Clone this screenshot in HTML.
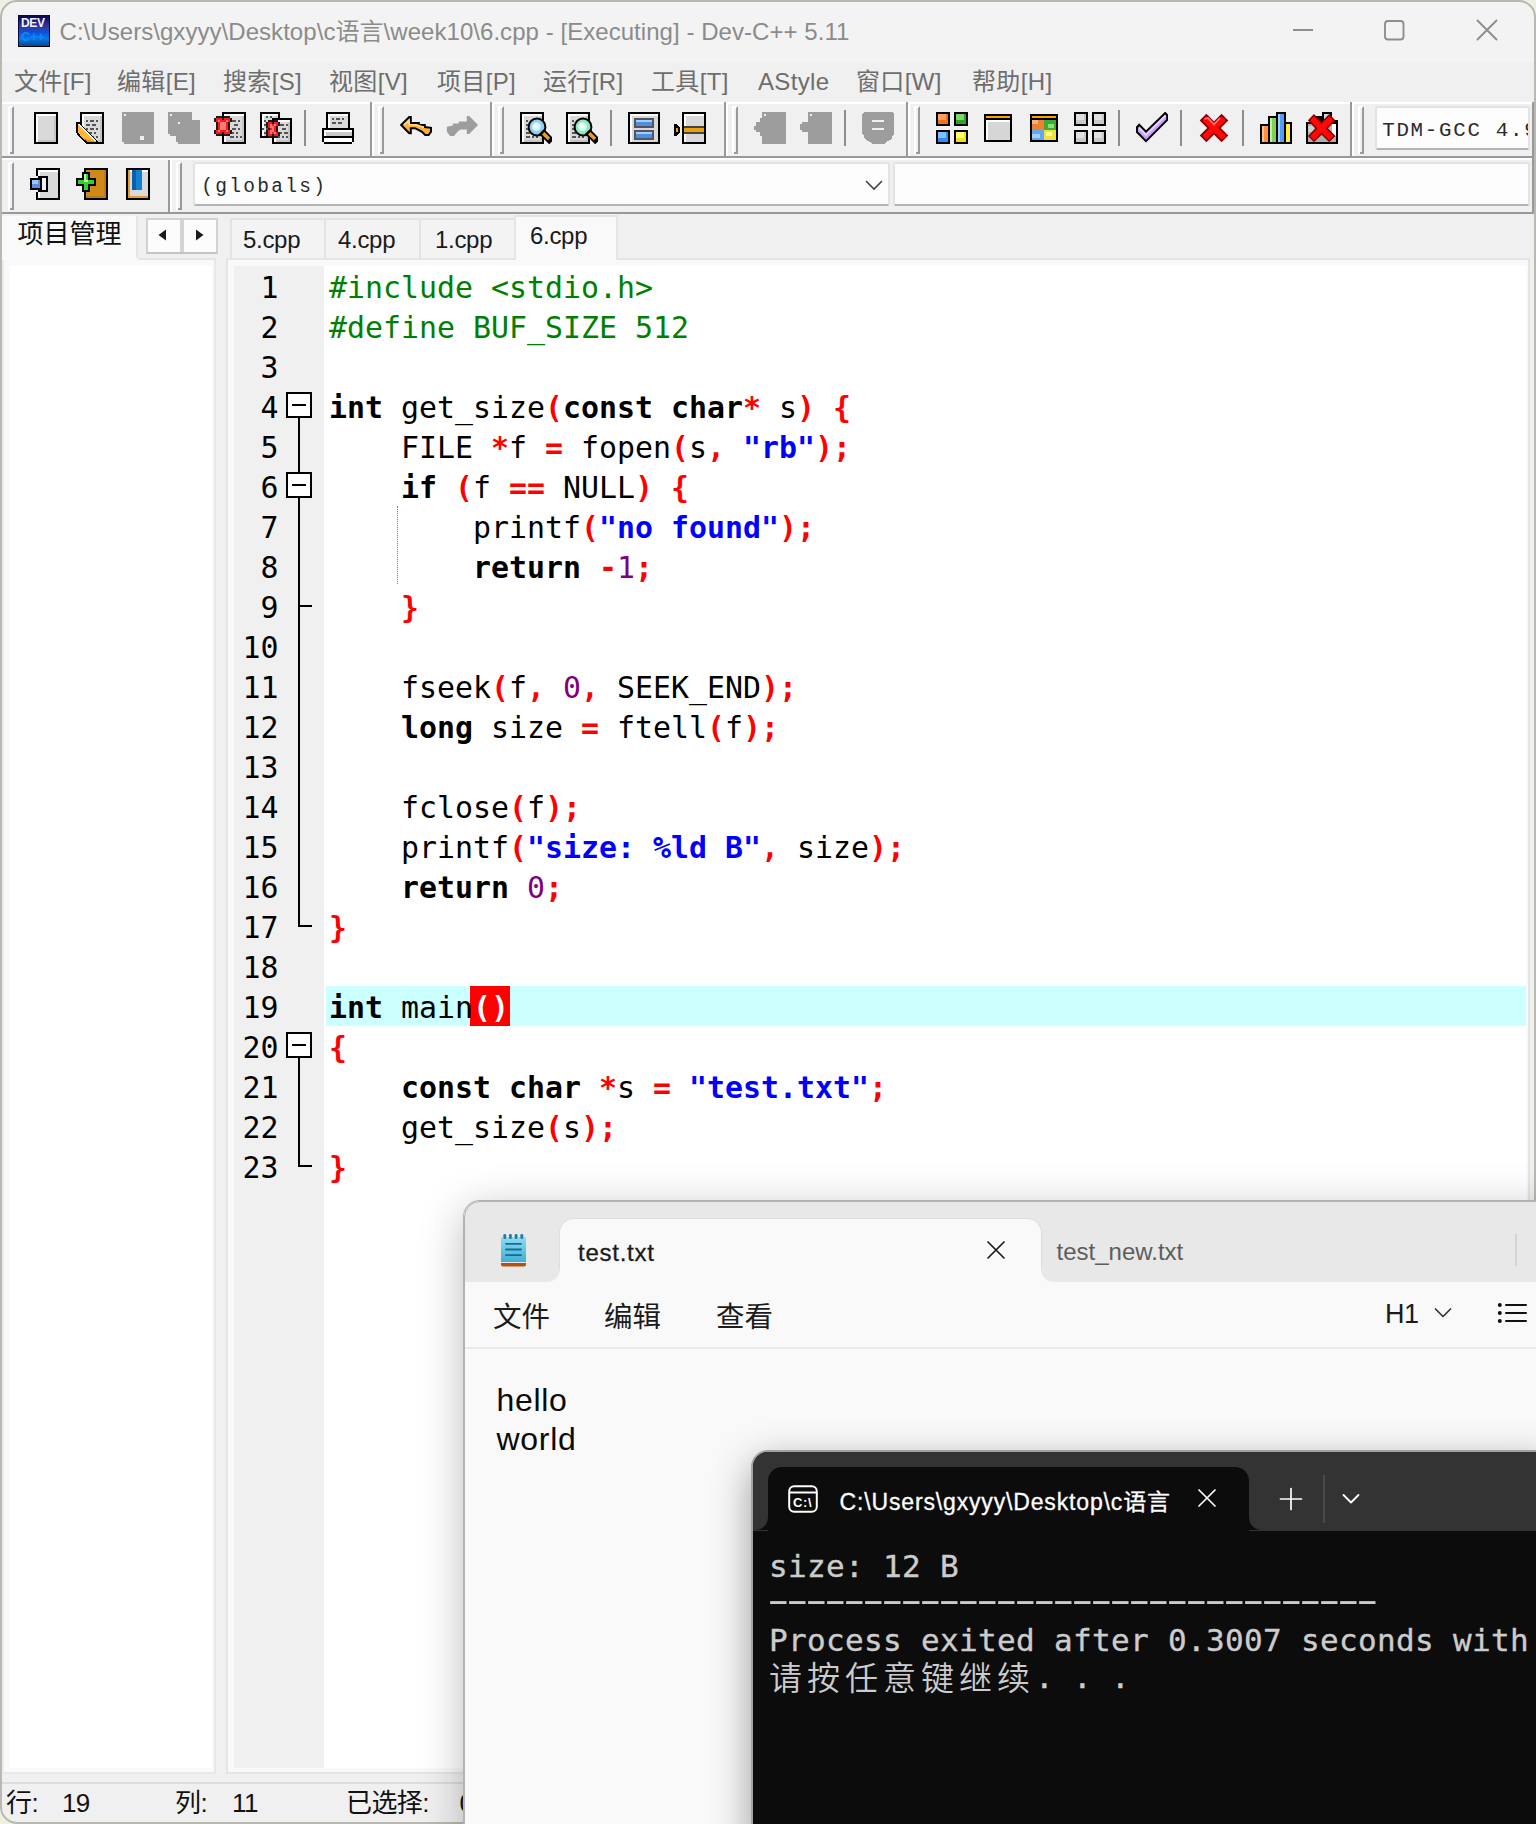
<!DOCTYPE html>
<html lang="zh">
<head>
<meta charset="utf-8">
<title>Dev-C++</title>
<style>
*{box-sizing:border-box;margin:0;padding:0}
html,body{width:1536px;height:1824px;overflow:hidden;background:#f0f0e2}
body{position:relative;font-family:"Liberation Sans","Noto Sans CJK SC",sans-serif;color:#000}
.abs{position:absolute}
#win{position:absolute;left:0;top:0;width:1536px;height:1824px;background:#f0f0f0;border-radius:17px 17px 0 17px;overflow:hidden}
#winb{position:absolute;left:0;top:0;width:1536px;height:1824px;border:2px solid #b9b9b1;border-radius:17px 17px 0 17px;pointer-events:none}
#title{position:absolute;left:0;top:0;width:1536px;height:62px;background:#f3f3f3}
#title .t{position:absolute;left:59.5px;top:16px;font-size:24px;line-height:32px;color:#8b8b8b;white-space:nowrap;letter-spacing:0.05px}
#menu{position:absolute;left:0;top:62px;width:1536px;height:38px;background:#f0f0f0}
#menu span{position:absolute;top:4px;font-size:24px;line-height:32px;color:#6d6d6d;white-space:nowrap;letter-spacing:0.35px}
/* toolbars */
.hl2{position:absolute;height:2px;left:2px;width:1532px}
.grip{position:absolute;width:4px;border-left:2px solid #fff;border-right:2px solid #a0a0a0;height:46px}
.vsep{position:absolute;width:4px;border-left:2px solid #a0a0a0;border-right:2px solid #fff;height:54px}
.tsep{position:absolute;width:2px;background:#8f8f8f;top:110px;height:36px}
.ico{position:absolute;width:32px;height:32px}
.ico svg{display:block;shape-rendering:crispEdges}
.combo{position:absolute;background:#fdfdfd;border:2px solid #e3e3e3;border-bottom-color:#b4b4b4;border-radius:3px}
.mono{font-family:"Liberation Mono",monospace}
/* tabs */
.tab{position:absolute;font-size:24px;line-height:30px;white-space:nowrap;color:#1a1a1a;letter-spacing:-0.3px}
.st{top:1786px;font-size:26px;line-height:34px;white-space:nowrap;color:#111;letter-spacing:-0.6px}
/* editor */
#ed{position:absolute;left:226px;top:258px;width:1304px;height:1516px;background:#f9f9f9;border:2px solid #e5e5e5}
#gut{position:absolute;left:234px;top:266px;width:90px;height:1502px;background:#f0f0f0}
#code{position:absolute;left:324px;top:266px;width:1202px;height:1502px;background:#fff}
.code,.ln{font-family:"DejaVu Sans Mono","Liberation Mono",monospace}
.ln{position:absolute;left:234px;width:44.5px;text-align:right;height:40px;line-height:40px;margin-top:2px;font-size:29.9px;white-space:pre;color:#000}
.cl{position:absolute;left:329px;height:40px;line-height:40px;margin-top:2px;font-size:29.9px;white-space:pre;color:#000}
.k{font-weight:bold}
.s{font-weight:bold;color:#f00}
.q{font-weight:bold;color:#00f}
.p{color:#008000}
.n{color:#800080}
.hl{color:#fff;font-weight:bold}
.fb{position:absolute;left:286px;width:26px;height:26px;border:2px solid #000;background:#fff}
.fb:after{content:"";position:absolute;left:4px;top:10px;width:14px;height:2px;background:#000}
.fv{position:absolute;left:298px;width:2px;background:#000}
.fh{position:absolute;left:298px;width:14px;height:2px;background:#000}

/* notepad */
#np{position:absolute;left:464px;top:1201px;width:1100px;height:650px;background:#f9f9f9;border-radius:16px;overflow:hidden;box-shadow:0 0 0 1px #b2b2b2,0 10px 45px 0 rgba(0,0,0,0.27);}
.nt{font-size:24px;line-height:32px;white-space:nowrap}
.nm{top:95px;font-size:28.5px;line-height:38px;white-space:nowrap;color:#1b1b1b;font-family:"Noto Sans CJK SC",sans-serif}

/* terminal */
#tm{position:absolute;left:753px;top:1452px;width:800px;height:400px;background:#0c0c0c;border-radius:15px;overflow:hidden;box-shadow:0 0 0 2px #a2a2a2,0 12px 40px 0 rgba(0,0,0,0.42);}
.tt{left:16px;font-family:"DejaVu Sans Mono","Liberation Mono",monospace;font-size:31px;line-height:37px;letter-spacing:0.337px;-webkit-text-stroke:0.35px #ccc;color:#cccccc;white-space:pre}
.td{font-size:36px;letter-spacing:-11px;line-height:37px;transform:scaleX(1.78);transform-origin:0 0;left:6px;-webkit-text-stroke:0}
.tc{left:16px;font-family:"Noto Sans CJK SC",sans-serif;font-weight:350;font-size:33px;line-height:37px;letter-spacing:5px;color:#cccccc;white-space:pre}
.tt2{position:relative;top:-2px;font-family:"DejaVu Sans Mono","Liberation Mono",monospace;font-size:31px;letter-spacing:0.337px;-webkit-text-stroke:0.35px #ccc}
</style>
</head>
<body>
<div id="win">
  <div id="title">
    <div class="abs" style="left:18px;top:15px;width:32px;height:32px;background:linear-gradient(#0a0a50 0%,#3038a0 35%,#1050d8 55%,#0878e8 75%,#064890 100%);border:1px solid #000;border-top-color:#0a0a40;border-left-color:#0a0a40;overflow:hidden">
      <div class="abs" style="left:2px;top:1px;font:bold 12px/13px 'Liberation Sans',sans-serif;color:#f4f4ff;letter-spacing:-0.3px">DEV</div>
      <div class="abs" style="left:2px;top:14px;font:bold 13px/14px 'Liberation Sans',sans-serif;color:#1088f8;letter-spacing:-0.5px">C++</div>
    </div>
    <div class="t">C:\Users\gxyyy\Desktop\c语言\week10\6.cpp - [Executing] - Dev-C++ 5.11</div>
    <svg class="abs" style="left:1284px;top:14px" width="232" height="34" viewBox="0 0 232 34" fill="none" stroke="#8e8e8e" stroke-width="1.9">
      <path d="M9,16H29"/>
      <rect x="101" y="7" width="18.5" height="18.5" rx="3"/>
      <path d="M193.5,6.5L212.5,25.5M212.5,6.5L193.5,25.5" stroke-linecap="round"/>
    </svg>
  </div>
  <div id="menu">
    <span style="left:14px">文件[F]</span>
    <span style="left:117px">编辑[E]</span>
    <span style="left:223px">搜索[S]</span>
    <span style="left:329px">视图[V]</span>
    <span style="left:437px">项目[P]</span>
    <span style="left:543px">运行[R]</span>
    <span style="left:651px">工具[T]</span>
    <span style="left:758px">AStyle</span>
    <span style="left:856px">窗口[W]</span>
    <span style="left:972px">帮助[H]</span>
  </div>
  <!-- toolbars -->
  <div class="hl2" style="top:102px;background:#fff"></div>
  <div class="hl2" style="top:156px;background:#999"></div>
  <div class="hl2" style="top:158px;background:#fff"></div>
  <div class="hl2" style="top:212px;background:#999"></div>
  <div class="abs" style="left:1532px;top:102px;width:2px;height:112px;background:#999"></div>
  <div class="abs" style="left:8px;top:106px;width:6px;height:48px;border-left:2px solid #fff;border-top:2px solid #fff;border-right:2px solid #999;border-bottom:2px solid #999"></div>
  <div class="abs" style="left:8px;top:152px;width:2px;height:2px;background:#fff"></div>
  <div class="abs" style="left:378px;top:106px;width:6px;height:48px;border-left:2px solid #fff;border-top:2px solid #fff;border-right:2px solid #999;border-bottom:2px solid #999"></div>
  <div class="abs" style="left:378px;top:152px;width:2px;height:2px;background:#fff"></div>
  <div class="abs" style="left:498px;top:106px;width:6px;height:48px;border-left:2px solid #fff;border-top:2px solid #fff;border-right:2px solid #999;border-bottom:2px solid #999"></div>
  <div class="abs" style="left:498px;top:152px;width:2px;height:2px;background:#fff"></div>
  <div class="abs" style="left:732px;top:106px;width:6px;height:48px;border-left:2px solid #fff;border-top:2px solid #fff;border-right:2px solid #999;border-bottom:2px solid #999"></div>
  <div class="abs" style="left:732px;top:152px;width:2px;height:2px;background:#fff"></div>
  <div class="abs" style="left:914px;top:106px;width:6px;height:48px;border-left:2px solid #fff;border-top:2px solid #fff;border-right:2px solid #999;border-bottom:2px solid #999"></div>
  <div class="abs" style="left:914px;top:152px;width:2px;height:2px;background:#fff"></div>
  <div class="abs" style="left:1358px;top:106px;width:6px;height:48px;border-left:2px solid #fff;border-top:2px solid #fff;border-right:2px solid #999;border-bottom:2px solid #999"></div>
  <div class="abs" style="left:1358px;top:152px;width:2px;height:2px;background:#fff"></div>
  <div class="abs" style="left:370px;top:102px;width:2px;height:54px;background:#999"></div>
  <div class="abs" style="left:372px;top:102px;width:2px;height:54px;background:#fff"></div>
  <div class="abs" style="left:490px;top:102px;width:2px;height:54px;background:#999"></div>
  <div class="abs" style="left:492px;top:102px;width:2px;height:54px;background:#fff"></div>
  <div class="abs" style="left:724px;top:102px;width:2px;height:54px;background:#999"></div>
  <div class="abs" style="left:726px;top:102px;width:2px;height:54px;background:#fff"></div>
  <div class="abs" style="left:906px;top:102px;width:2px;height:54px;background:#999"></div>
  <div class="abs" style="left:908px;top:102px;width:2px;height:54px;background:#fff"></div>
  <div class="abs" style="left:1350px;top:102px;width:2px;height:54px;background:#999"></div>
  <div class="abs" style="left:1352px;top:102px;width:2px;height:54px;background:#fff"></div>
  <div class="abs" style="left:8px;top:162px;width:6px;height:48px;border-left:2px solid #fff;border-top:2px solid #fff;border-right:2px solid #999;border-bottom:2px solid #999"></div>
  <div class="abs" style="left:8px;top:208px;width:2px;height:2px;background:#fff"></div>
  <div class="abs" style="left:176px;top:162px;width:6px;height:48px;border-left:2px solid #fff;border-top:2px solid #fff;border-right:2px solid #999;border-bottom:2px solid #999"></div>
  <div class="abs" style="left:176px;top:208px;width:2px;height:2px;background:#fff"></div>
  <div class="abs" style="left:168px;top:160px;width:2px;height:52px;background:#999"></div>
  <div class="abs" style="left:170px;top:160px;width:2px;height:52px;background:#fff"></div>
  <div class="abs" style="left:304px;top:110px;width:2px;height:36px;background:#8d8d8d"></div>
  <div class="abs" style="left:610px;top:110px;width:2px;height:36px;background:#8d8d8d"></div>
  <div class="abs" style="left:844px;top:110px;width:2px;height:36px;background:#8d8d8d"></div>
  <div class="abs" style="left:1118px;top:110px;width:2px;height:36px;background:#8d8d8d"></div>
  <div class="abs" style="left:1180px;top:110px;width:2px;height:36px;background:#8d8d8d"></div>
  <div class="abs" style="left:1242px;top:110px;width:2px;height:36px;background:#8d8d8d"></div>
  <svg class="ico" style="left:30px;top:112px" width="32" height="32" viewBox="0 0 16 16" shape-rendering="crispEdges"><rect x="2" y="0" width="12" height="16" fill="#000"/><rect x="3" y="1" width="10" height="14" fill="#fff"/><rect x="4" y="2" width="9" height="13" fill="#d9d9d9"/><rect x="12" y="2" width="1" height="13" fill="#c4c4c4"/><rect x="4" y="14" width="9" height="1" fill="#c4c4c4"/></svg>
  <svg class="ico" style="left:76px;top:112px" width="32" height="32" viewBox="0 0 16 16" shape-rendering="crispEdges"><rect x="2" y="0" width="12" height="16" fill="#000"/><rect x="3" y="1" width="10" height="14" fill="#fff"/><rect x="4" y="2" width="9" height="13" fill="#d9d9d9"/><rect x="12" y="2" width="1" height="13" fill="#c4c4c4"/><rect x="4" y="14" width="9" height="1" fill="#c4c4c4"/><rect x="5" y="4" width="1" height="1" fill="#555"/><rect x="7" y="4" width="2" height="1" fill="#555"/><rect x="10" y="4" width="1" height="1" fill="#555"/><rect x="5" y="6" width="2" height="1" fill="#555"/><rect x="8" y="6" width="2" height="1" fill="#555"/><rect x="5" y="8" width="1" height="1" fill="#555"/><rect x="7" y="8" width="2" height="1" fill="#555"/><rect x="10" y="8" width="1" height="1" fill="#555"/><rect x="6" y="10" width="2" height="1" fill="#555"/><rect x="9" y="10" width="1" height="1" fill="#555"/><rect x="5" y="12" width="2" height="1" fill="#555"/><rect x="8" y="12" width="1" height="1" fill="#555"/><rect x="10" y="12" width="1" height="1" fill="#555"/><polygon points="0,10 1,12 3,14 5,16 0,16" fill="#f0f0f0"/><polygon points="0,5 2,5 2,6 11,15 11,16 5,16 3,14 1,12 0,10" fill="#000"/><polygon points="1,6 2,6 10,14.6 10,15 6,15 3,13 1,10" fill="#ffb733"/><polygon points="1,6 2,6 10,14.5 9,14.5 2,7.5" fill="#fff3d6"/><polygon points="3,13 10,15 6,15" fill="#f09000"/></svg>
  <svg class="ico" style="left:122px;top:112px" width="32" height="32" viewBox="0 0 16 16" shape-rendering="crispEdges"><path d="M0,0H16V16H1V15H0Z" fill="#9d9d9d"/><rect x="1" y="1" width="1" height="1" fill="#f0f0f0"/><rect x="9" y="12" width="2" height="2" fill="#f0f0f0"/></svg>
  <svg class="ico" style="left:168px;top:112px" width="32" height="32" viewBox="0 0 16 16" shape-rendering="crispEdges"><path d="M0,0H12V4H16V16H5V15H4V12H1V11H0Z" fill="#9d9d9d"/><rect x="1" y="1" width="1" height="1" fill="#f0f0f0"/><rect x="5" y="5" width="1" height="1" fill="#f0f0f0"/></svg>
  <svg class="ico" style="left:214px;top:112px" width="32" height="32" viewBox="0 0 16 16" shape-rendering="crispEdges"><rect x="4" y="0" width="12" height="16" fill="#000"/><rect x="5" y="1" width="10" height="14" fill="#fff"/><rect x="6" y="2" width="9" height="13" fill="#d9d9d9"/><rect x="14" y="2" width="1" height="13" fill="#c4c4c4"/><rect x="6" y="14" width="9" height="1" fill="#c4c4c4"/><rect x="9" y="4" width="2" height="1" fill="#555"/><rect x="12" y="4" width="1" height="1" fill="#555"/><rect x="10" y="6" width="2" height="1" fill="#555"/><rect x="9" y="8" width="2" height="1" fill="#555"/><rect x="12" y="8" width="1" height="1" fill="#555"/><rect x="9" y="10" width="1" height="1" fill="#555"/><rect x="11" y="10" width="1" height="1" fill="#555"/><rect x="8" y="12" width="2" height="1" fill="#555"/><rect x="11" y="12" width="1" height="1" fill="#555"/><rect x="13" y="12" width="1" height="1" fill="#555"/><rect x="0" y="3" width="1" height="1" fill="#1c1c1c"/><rect x="0" y="4" width="1" height="1" fill="#1c1c1c"/><rect x="0" y="9" width="1" height="1" fill="#1c1c1c"/><rect x="0" y="10" width="1" height="1" fill="#1c1c1c"/><rect x="1" y="2" width="1" height="1" fill="#1c1c1c"/><rect x="1" y="5" width="1" height="1" fill="#1c1c1c"/><rect x="1" y="6" width="1" height="1" fill="#1c1c1c"/><rect x="1" y="7" width="1" height="1" fill="#1c1c1c"/><rect x="1" y="8" width="1" height="1" fill="#1c1c1c"/><rect x="1" y="11" width="1" height="1" fill="#1c1c1c"/><rect x="2" y="2" width="1" height="1" fill="#1c1c1c"/><rect x="2" y="11" width="1" height="1" fill="#1c1c1c"/><rect x="3" y="2" width="1" height="1" fill="#1c1c1c"/><rect x="3" y="11" width="1" height="1" fill="#1c1c1c"/><rect x="4" y="3" width="1" height="1" fill="#1c1c1c"/><rect x="4" y="10" width="1" height="1" fill="#1c1c1c"/><rect x="5" y="2" width="1" height="1" fill="#1c1c1c"/><rect x="5" y="11" width="1" height="1" fill="#1c1c1c"/><rect x="6" y="2" width="1" height="1" fill="#1c1c1c"/><rect x="6" y="11" width="1" height="1" fill="#1c1c1c"/><rect x="7" y="2" width="1" height="1" fill="#1c1c1c"/><rect x="7" y="5" width="1" height="1" fill="#1c1c1c"/><rect x="7" y="6" width="1" height="1" fill="#1c1c1c"/><rect x="7" y="7" width="1" height="1" fill="#1c1c1c"/><rect x="7" y="8" width="1" height="1" fill="#1c1c1c"/><rect x="7" y="11" width="1" height="1" fill="#1c1c1c"/><rect x="8" y="3" width="1" height="1" fill="#1c1c1c"/><rect x="8" y="4" width="1" height="1" fill="#1c1c1c"/><rect x="8" y="9" width="1" height="1" fill="#1c1c1c"/><rect x="8" y="10" width="1" height="1" fill="#1c1c1c"/><rect x="1" y="3" width="3" height="1" fill="#ff1818"/><rect x="5" y="3" width="3" height="1" fill="#ff1818"/><rect x="1" y="4" width="7" height="1" fill="#ff1818"/><rect x="2" y="5" width="5" height="1" fill="#ff1818"/><rect x="2" y="6" width="5" height="1" fill="#ff1818"/><rect x="2" y="7" width="5" height="1" fill="#ff1818"/><rect x="2" y="8" width="5" height="1" fill="#ff1818"/><rect x="1" y="9" width="7" height="1" fill="#ff1818"/><rect x="1" y="10" width="3" height="1" fill="#ff1818"/><rect x="5" y="10" width="3" height="1" fill="#ff1818"/><rect x="2" y="4" width="1" height="1" fill="#ff7a7a"/><rect x="6" y="4" width="1" height="1" fill="#ff7a7a"/><rect x="3" y="5" width="3" height="1" fill="#ff7a7a"/><rect x="3" y="6" width="3" height="1" fill="#ff7a7a"/><rect x="3" y="7" width="3" height="1" fill="#ff7a7a"/><rect x="3" y="8" width="3" height="1" fill="#ff7a7a"/><rect x="2" y="9" width="1" height="1" fill="#ff7a7a"/><rect x="6" y="9" width="1" height="1" fill="#ff7a7a"/></svg>
  <svg class="ico" style="left:260px;top:112px" width="32" height="32" viewBox="0 0 16 16" shape-rendering="crispEdges"><rect x="0" y="0" width="10" height="13" fill="#000"/><rect x="1" y="1" width="8" height="11" fill="#fff"/><rect x="2" y="2" width="7" height="10" fill="#d9d9d9"/><rect x="8" y="2" width="1" height="10" fill="#c4c4c4"/><rect x="2" y="11" width="7" height="1" fill="#c4c4c4"/><rect x="3" y="2" width="1" height="1" fill="#555"/><rect x="5" y="2" width="1" height="1" fill="#555"/><rect x="2" y="4" width="1" height="1" fill="#555"/><rect x="4" y="4" width="1" height="1" fill="#555"/><rect x="2" y="6" width="1" height="1" fill="#555"/><rect x="1" y="8" width="1" height="1" fill="#555"/><rect x="3" y="8" width="1" height="1" fill="#555"/><rect x="2" y="10" width="1" height="1" fill="#555"/><rect x="4" y="10" width="1" height="1" fill="#555"/><rect x="6" y="3" width="10" height="13" fill="#000"/><rect x="7" y="4" width="8" height="11" fill="#fff"/><rect x="8" y="5" width="7" height="10" fill="#d9d9d9"/><rect x="14" y="5" width="1" height="10" fill="#c4c4c4"/><rect x="8" y="14" width="7" height="1" fill="#c4c4c4"/><rect x="10" y="6" width="2" height="1" fill="#555"/><rect x="13" y="6" width="1" height="1" fill="#555"/><rect x="11" y="8" width="2" height="1" fill="#555"/><rect x="10" y="10" width="1" height="1" fill="#555"/><rect x="12" y="10" width="2" height="1" fill="#555"/><rect x="9" y="12" width="1" height="1" fill="#555"/><rect x="11" y="12" width="1" height="1" fill="#555"/><rect x="13" y="12" width="1" height="1" fill="#555"/><rect x="3" y="5" width="1" height="1" fill="#1c1c1c"/><rect x="3" y="6" width="1" height="1" fill="#1c1c1c"/><rect x="3" y="7" width="1" height="1" fill="#1c1c1c"/><rect x="3" y="9" width="1" height="1" fill="#1c1c1c"/><rect x="3" y="10" width="1" height="1" fill="#1c1c1c"/><rect x="3" y="11" width="1" height="1" fill="#1c1c1c"/><rect x="4" y="4" width="1" height="1" fill="#1c1c1c"/><rect x="4" y="8" width="1" height="1" fill="#1c1c1c"/><rect x="4" y="12" width="1" height="1" fill="#1c1c1c"/><rect x="5" y="4" width="1" height="1" fill="#1c1c1c"/><rect x="5" y="12" width="1" height="1" fill="#1c1c1c"/><rect x="6" y="5" width="1" height="1" fill="#1c1c1c"/><rect x="6" y="11" width="1" height="1" fill="#1c1c1c"/><rect x="7" y="4" width="1" height="1" fill="#1c1c1c"/><rect x="7" y="12" width="1" height="1" fill="#1c1c1c"/><rect x="8" y="4" width="1" height="1" fill="#1c1c1c"/><rect x="8" y="7" width="1" height="1" fill="#1c1c1c"/><rect x="8" y="8" width="1" height="1" fill="#1c1c1c"/><rect x="8" y="9" width="1" height="1" fill="#1c1c1c"/><rect x="8" y="12" width="1" height="1" fill="#1c1c1c"/><rect x="9" y="5" width="1" height="1" fill="#1c1c1c"/><rect x="9" y="6" width="1" height="1" fill="#1c1c1c"/><rect x="9" y="10" width="1" height="1" fill="#1c1c1c"/><rect x="9" y="11" width="1" height="1" fill="#1c1c1c"/><rect x="4" y="5" width="2" height="1" fill="#ff1818"/><rect x="7" y="5" width="2" height="1" fill="#ff1818"/><rect x="4" y="6" width="5" height="1" fill="#ff1818"/><rect x="4" y="7" width="4" height="1" fill="#ff1818"/><rect x="5" y="8" width="3" height="1" fill="#ff1818"/><rect x="4" y="9" width="4" height="1" fill="#ff1818"/><rect x="4" y="10" width="5" height="1" fill="#ff1818"/><rect x="4" y="11" width="2" height="1" fill="#ff1818"/><rect x="7" y="11" width="2" height="1" fill="#ff1818"/><rect x="5" y="6" width="1" height="1" fill="#ff7a7a"/><rect x="7" y="6" width="1" height="1" fill="#ff7a7a"/><rect x="5" y="7" width="2" height="1" fill="#ff7a7a"/><rect x="6" y="8" width="1" height="1" fill="#ff7a7a"/><rect x="5" y="9" width="2" height="1" fill="#ff7a7a"/><rect x="5" y="10" width="1" height="1" fill="#ff7a7a"/><rect x="7" y="10" width="1" height="1" fill="#ff7a7a"/></svg>
  <svg class="ico" style="left:322px;top:112px" width="32" height="32" viewBox="0 0 16 16" shape-rendering="crispEdges"><rect x="2" y="0" width="12" height="9" fill="#000"/><rect x="3" y="1" width="10" height="8" fill="#fff"/><rect x="4" y="2" width="9" height="7" fill="#d9d9d9"/><rect x="5" y="3" width="1" height="1" fill="#555"/><rect x="7" y="3" width="2" height="1" fill="#555"/><rect x="10" y="3" width="1" height="1" fill="#555"/><rect x="5" y="5" width="2" height="1" fill="#555"/><rect x="8" y="5" width="2" height="1" fill="#555"/><rect x="0" y="8" width="16" height="8" fill="#000"/><rect x="1" y="9" width="14" height="3" fill="#fff"/><rect x="2" y="10" width="13" height="2" fill="#c8c8c8"/><rect x="1" y="13" width="14" height="2" fill="#fff"/><rect x="0" y="15" width="1" height="1" fill="#f0f0f0"/><rect x="15" y="15" width="1" height="1" fill="#f0f0f0"/></svg>
  <svg class="ico" style="left:400px;top:112px" width="32" height="32" viewBox="0 0 16 16"><path d="M0.6,6.5 L4.6,2.5 L5.4,2.5 L5.4,5.5 L9.4,5.5 L9.4,6.5 L12.4,6.5 L12.4,7.5 L15.5,7.9 L15.5,9.8 L14.3,11.5 L12.6,11.5 L11,9.9 L9,8.8 L7.4,8.1 L5.4,8.1 L5.4,10.6 L4.6,10.6 Z" fill="#ffb02e" stroke="#000" stroke-width="1" stroke-linejoin="miter"/><path d="M2,6.5 L4.5,4.2 L4.6,6.4 L9,6.6 L12,7.8" fill="none" stroke="#ffdc98" stroke-width="0.8"/></svg>
  <svg class="ico" style="left:446px;top:112px" width="32" height="32" viewBox="0 0 16 16"><path d="M16,6.5 L11.6,2 L10.4,2 L10.4,4.8 L6.4,4.8 L6.4,5.8 L3.4,5.8 L3.4,6.8 L0.4,7.4 L0.4,9.8 L2,12 L4,12 L6,9.6 L7.4,8.8 L10.4,8.8 L10.4,11 L11.6,11 Z" fill="#9d9d9d"/></svg>
  <svg class="ico" style="left:520px;top:112px" width="32" height="32" viewBox="0 0 16 16"><rect x="0" y="0" width="12" height="16" fill="#000"/><rect x="1" y="1" width="10" height="14" fill="#fff"/><rect x="2" y="2" width="9" height="13" fill="#d9d9d9"/><rect x="10" y="2" width="1" height="13" fill="#c4c4c4"/><rect x="2" y="14" width="9" height="1" fill="#c4c4c4"/><rect x="3" y="4" width="1" height="1" fill="#555"/><rect x="3" y="6" width="1" height="1" fill="#555"/><rect x="3" y="8" width="1" height="1" fill="#555"/><rect x="3" y="10" width="2" height="1" fill="#555"/><rect x="3" y="12" width="2" height="1" fill="#555"/><rect x="6" y="12" width="1" height="1" fill="#555"/><rect x="8" y="12" width="1" height="1" fill="#555"/><circle cx="8.5" cy="7.5" r="4.2" fill="#8fd0f0" stroke="#000" stroke-width="1"/><circle cx="8.2" cy="7.3" r="2.2" fill="#d8f2ff"/><circle cx="8" cy="7.2" r="0.9" fill="#fff"/><path d="M12,11 L14.6,13.6" stroke="#000" stroke-width="3.6" stroke-linecap="square"/><path d="M11.6,10.6 L14.5,13.5" stroke="#e8a020" stroke-width="1.7"/></svg>
  <svg class="ico" style="left:566px;top:112px" width="32" height="32" viewBox="0 0 16 16"><rect x="0" y="0" width="12" height="16" fill="#000"/><rect x="1" y="1" width="10" height="14" fill="#fff"/><rect x="2" y="2" width="9" height="13" fill="#d9d9d9"/><rect x="10" y="2" width="1" height="13" fill="#c4c4c4"/><rect x="2" y="14" width="9" height="1" fill="#c4c4c4"/><rect x="3" y="4" width="1" height="1" fill="#555"/><rect x="3" y="6" width="1" height="1" fill="#555"/><rect x="3" y="8" width="1" height="1" fill="#555"/><rect x="3" y="10" width="2" height="1" fill="#555"/><rect x="3" y="12" width="2" height="1" fill="#555"/><rect x="6" y="12" width="1" height="1" fill="#555"/><rect x="8" y="12" width="1" height="1" fill="#555"/><circle cx="8.5" cy="7.5" r="4.2" fill="#8fe8c0" stroke="#000" stroke-width="1"/><circle cx="8.2" cy="7.3" r="2.2" fill="#d8fff0"/><circle cx="8" cy="7.2" r="0.9" fill="#fff"/><path d="M12,11 L14.6,13.6" stroke="#000" stroke-width="3.6" stroke-linecap="square"/><path d="M11.6,10.6 L14.5,13.5" stroke="#e8a020" stroke-width="1.7"/></svg>
  <svg class="ico" style="left:628px;top:112px" width="32" height="32" viewBox="0 0 16 16" shape-rendering="crispEdges"><rect x="0" y="0" width="16" height="16" fill="#000"/><rect x="1" y="1" width="14" height="14" fill="#fff"/><rect x="2" y="2" width="13" height="13" fill="#d9d9d9"/><rect x="3" y="3" width="10" height="5" fill="#555"/><rect x="4" y="4" width="8" height="3" fill="#4a90e8"/><rect x="4" y="4" width="8" height="1" fill="#a8cdf8"/><rect x="3" y="9" width="10" height="5" fill="#555"/><rect x="4" y="10" width="8" height="3" fill="#4a90e8"/><rect x="4" y="10" width="8" height="1" fill="#a8cdf8"/></svg>
  <svg class="ico" style="left:674px;top:112px" width="32" height="32" viewBox="0 0 16 16" shape-rendering="crispEdges"><rect x="4" y="0" width="12" height="16" fill="#000"/><rect x="5" y="1" width="10" height="14" fill="#fff"/><rect x="6" y="2" width="9" height="13" fill="#d9d9d9"/><rect x="5" y="7" width="10" height="4" fill="#444"/><rect x="5" y="8" width="10" height="2" fill="#e8a010"/><polygon points="0,6 1,6 3,8 3,10 1,12 0,12" fill="#000"/><rect x="1" y="8" width="1" height="2" fill="#e8a010"/></svg>
  <svg class="ico" style="left:754px;top:112px" width="32" height="32" viewBox="0 0 16 16" shape-rendering="crispEdges"><path d="M4,0H16V16H4V12H3V10H1V9H0V7H1V5H3V3H4Z" fill="#9d9d9d"/><rect x="5" y="1" width="1" height="1" fill="#f0f0f0"/></svg>
  <svg class="ico" style="left:800px;top:112px" width="32" height="32" viewBox="0 0 16 16" shape-rendering="crispEdges"><path d="M4,0H16V16H4V10H1V9H0V6H1V5H4Z" fill="#9d9d9d"/><rect x="5" y="1" width="1" height="1" fill="#f0f0f0"/></svg>
  <svg class="ico" style="left:862px;top:112px" width="32" height="32" viewBox="0 0 16 16" shape-rendering="crispEdges"><path d="M1,0H15L16,1V11L15,12V13L14,14L12,15L11,16H5L4,15L2,14L1,13V12L0,11V1Z" fill="#9d9d9d"/><rect x="5" y="4" width="6" height="1" fill="#f0f0f0"/><rect x="5" y="8" width="6" height="1" fill="#f0f0f0"/></svg>
  <svg class="ico" style="left:936px;top:112px" width="32" height="32" viewBox="0 0 16 16" shape-rendering="crispEdges"><rect x="0" y="0" width="7" height="7" fill="#000"/><rect x="1" y="1" width="5" height="5" fill="#f07020"/><rect x="1" y="1" width="4" height="3" fill="#ffa060"/><rect x="9" y="0" width="7" height="7" fill="#000"/><rect x="10" y="1" width="5" height="5" fill="#30a030"/><rect x="10" y="1" width="4" height="3" fill="#80d860"/><rect x="0" y="9" width="7" height="7" fill="#000"/><rect x="1" y="10" width="5" height="5" fill="#3090f0"/><rect x="1" y="10" width="4" height="3" fill="#80c0ff"/><rect x="9" y="9" width="7" height="7" fill="#000"/><rect x="10" y="10" width="5" height="5" fill="#f0e020"/><rect x="10" y="10" width="4" height="3" fill="#ffff70"/></svg>
  <svg class="ico" style="left:982px;top:112px" width="32" height="32" viewBox="0 0 16 16" shape-rendering="crispEdges"><rect x="1" y="1" width="14" height="14" fill="#000"/><rect x="2" y="2" width="12" height="1" fill="#ffa000"/><rect x="2" y="4" width="12" height="10" fill="#fff"/><rect x="3" y="5" width="11" height="9" fill="#d6d6d6"/></svg>
  <svg class="ico" style="left:1028px;top:112px" width="32" height="32" viewBox="0 0 16 16" shape-rendering="crispEdges"><rect x="1" y="1" width="14" height="14" fill="#000"/><rect x="2" y="2" width="12" height="1" fill="#ffa000"/><rect x="2" y="4" width="6" height="5" fill="#f08030"/><rect x="8" y="4" width="6" height="5" fill="#40a838"/><rect x="2" y="9" width="6" height="5" fill="#60a8f0"/><rect x="8" y="9" width="6" height="5" fill="#f0e040"/><rect x="2" y="4" width="3" height="2" fill="#ffb080"/><rect x="10" y="6" width="3" height="2" fill="#90e070"/><rect x="2" y="11" width="4" height="2" fill="#a0d0ff"/><rect x="9" y="10" width="3" height="2" fill="#ffff90"/></svg>
  <svg class="ico" style="left:1074px;top:112px" width="32" height="32" viewBox="0 0 16 16" shape-rendering="crispEdges"><rect x="0" y="0" width="7" height="7" fill="#000"/><rect x="1" y="1" width="5" height="5" fill="#c8c8c8"/><rect x="1" y="1" width="4" height="3" fill="#e0e0e0"/><rect x="9" y="0" width="7" height="7" fill="#000"/><rect x="10" y="1" width="5" height="5" fill="#c8c8c8"/><rect x="10" y="1" width="4" height="3" fill="#e0e0e0"/><rect x="0" y="9" width="7" height="7" fill="#000"/><rect x="1" y="10" width="5" height="5" fill="#c8c8c8"/><rect x="1" y="10" width="4" height="3" fill="#e0e0e0"/><rect x="9" y="9" width="7" height="7" fill="#000"/><rect x="10" y="10" width="5" height="5" fill="#c8c8c8"/><rect x="10" y="10" width="4" height="3" fill="#e0e0e0"/></svg>
  <svg class="ico" style="left:1136px;top:112px" width="32" height="32" viewBox="0 0 16 16"><path d="M0.5,7.6 L1.6,6.4 L5,9.8 L14.6,0.5 L15.6,1.5 L15.6,4 L5,14.6 L0.5,10 Z" fill="#c8a0ff" stroke="#000" stroke-width="1"/><path d="M1.6,8 L5,11.4 L14.8,1.8" fill="none" stroke="#e8d4ff" stroke-width="0.9"/></svg>
  <svg class="ico" style="left:1198px;top:112px" width="32" height="32" viewBox="0 0 16 16"><path d="M1.5,4.2 L4.2,1.5 L8,5.3 L11.8,1.5 L14.5,4.2 L10.7,8 L14.5,11.8 L11.8,14.5 L8,10.7 L4.2,14.5 L1.5,11.8 L5.3,8 Z" fill="#ff0808" stroke="#8a0000" stroke-width="0.9"/><path d="M3.2,3.4 L5,3 L8,6.2 L11,3" fill="none" stroke="#ff6a6a" stroke-width="0.9"/></svg>
  <svg class="ico" style="left:1260px;top:112px" width="32" height="32" viewBox="0 0 16 16" shape-rendering="crispEdges"><rect x="0" y="6" width="5" height="10" fill="#000"/><rect x="4" y="2" width="5" height="14" fill="#000"/><rect x="8" y="0" width="5" height="16" fill="#000"/><rect x="12" y="5" width="4" height="11" fill="#000"/><rect x="1" y="7" width="3" height="8" fill="#ff9040"/><rect x="5" y="3" width="3" height="12" fill="#80d050"/><rect x="9" y="1" width="3" height="14" fill="#50a0f8"/><rect x="13" y="6" width="2" height="9" fill="#fff040"/><rect x="1" y="7" width="1" height="8" fill="#ffc090"/><rect x="5" y="3" width="1" height="12" fill="#c0f0a0"/><rect x="9" y="1" width="1" height="14" fill="#a0d0ff"/></svg>
  <svg class="ico" style="left:1306px;top:112px" width="32" height="32" viewBox="0 0 16 16"><path d="M0,5H5V2H8V0H13V4H16V16H0Z" fill="#000"/><rect x="1" y="6" width="14" height="9" fill="#b0b0b0"/><rect x="9" y="1" width="3" height="4" fill="#d8d8d8"/><rect x="13" y="6" width="2" height="6" fill="#fff"/><rect x="1" y="7" width="3" height="3" fill="#d0d0d0"/><path d="M1.5,4.2 L4,1.6 L7.8,5.4 L11.6,1.6 L14.2,4.2 L10.4,8.2 L14.2,12 L11.6,14.6 L7.8,10.8 L4,14.6 L1.5,12 L5.2,8.2 Z" fill="#ff0808" stroke="#900000" stroke-width="0.8"/></svg>
  <div class="combo" style="left:1375px;top:106px;width:155px;height:44px;overflow:hidden"><div class="abs mono" style="left:5.2px;top:7px;font-size:20.8px;line-height:32px;letter-spacing:1.72px;white-space:pre;color:#2a2a2a">TDM-GCC 4.9.2 64-bit Release</div></div>
  <svg class="ico" style="left:30px;top:168px" width="32" height="32" viewBox="0 0 16 16" shape-rendering="crispEdges"><rect x="3" y="0" width="12" height="16" fill="#000"/><rect x="4" y="1" width="10" height="14" fill="#fff"/><rect x="5" y="2" width="9" height="13" fill="#d9d9d9"/><rect x="3" y="4" width="5" height="8" fill="#f0f0f0"/><rect x="4" y="4" width="5" height="1" fill="#000"/><rect x="4" y="11" width="5" height="1" fill="#000"/><rect x="8" y="4" width="1" height="8" fill="#000"/><rect x="0" y="5" width="6" height="6" fill="#000"/><rect x="1" y="6" width="4" height="4" fill="#5a90e0"/><rect x="1" y="6" width="3" height="2" fill="#a0c4f8"/></svg>
  <svg class="ico" style="left:76px;top:168px" width="32" height="32" viewBox="0 0 16 16" shape-rendering="crispEdges"><rect x="4" y="0" width="12" height="16" fill="#000"/><rect x="5" y="1" width="10" height="14" fill="#c07810"/><rect x="5" y="1" width="9" height="13" fill="#d08818"/><path d="M3,2H7V5H10V9H7V12H3V9H0V5H3Z" fill="#000"/><path d="M4,3H6V6H9V8H6V11H4V8H1V6H4Z" fill="#30d030"/><rect x="4" y="6" width="2" height="1" fill="#b0ffb0"/><rect x="4" y="3" width="1" height="3" fill="#b0ffb0"/></svg>
  <svg class="ico" style="left:122px;top:168px" width="32" height="32" viewBox="0 0 16 16" shape-rendering="crispEdges"><rect x="2" y="0" width="12" height="16" fill="#000"/><rect x="3" y="1" width="10" height="14" fill="#fff"/><rect x="4" y="2" width="9" height="12" fill="#d9d9d9"/><rect x="3" y="14" width="10" height="1" fill="#e0a030"/><rect x="5" y="1" width="5" height="10" fill="#1080d0"/><rect x="5" y="1" width="2" height="10" fill="#0860a8"/><rect x="3" y="1" width="1" height="14" fill="#e0a030"/></svg>
  <div class="combo" style="left:193px;top:162px;width:697px;height:44px"></div>
  <div class="abs mono" style="left:201.2px;top:171px;font-size:19.5px;line-height:32px;white-space:pre;letter-spacing:2.3px;color:#2a2a2a">(globals)</div>
  <svg class="abs" style="left:864px;top:178px" width="20" height="14" viewBox="0 0 20 14"><path d="M2,3 L10,11 L18,3" fill="none" stroke="#444" stroke-width="1.6"/></svg>
  <div class="combo" style="left:893px;top:162px;width:637px;height:44px"></div>
  <!-- left panel + tabs -->
  <div class="abs" style="left:2px;top:216px;width:136px;height:48px;background:#f9f9f9;border-right:2px solid #e5e5e5"></div>
  <div class="abs" style="left:2px;top:258px;width:214px;height:1516px;background:#f9f9f9;border-right:2px solid #e8e8e8;border-bottom:2px solid #e8e8e8"></div>
  <div class="abs" style="left:2px;top:216px;width:2px;height:1558px;background:#ececec"></div>
  <div class="abs" style="left:138px;top:258px;width:78px;height:2px;background:#e5e5e5"></div>
  <div class="abs" style="left:2px;top:216px;width:134px;height:44px;background:#f9f9f9"></div>
  <div class="abs" style="left:10px;top:266px;width:202px;height:1502px;background:#fff"></div>
  <div class="abs" style="left:17.5px;top:215px;font-size:26px;line-height:34px;white-space:nowrap;color:#111;font-family:'Noto Sans CJK SC',sans-serif">项目管理</div>
  <div class="abs" style="left:146px;top:218px;width:72px;height:36px;background:#fcfcfc;border:2px solid #d2d2d2;border-bottom-color:#c4c4c4"></div>
  <div class="abs" style="left:180px;top:220px;width:4px;height:32px;background:#d4d4d4"></div>
  <svg class="abs" style="left:156px;top:228px" width="12" height="14" viewBox="0 0 12 14"><polygon points="2.5,7 10,1.5 10,12.5" fill="#1a1a1a"/></svg>
  <svg class="abs" style="left:194px;top:228px" width="12" height="14" viewBox="0 0 12 14"><polygon points="9.5,7 2,1.5 2,12.5" fill="#1a1a1a"/></svg>
  <!-- file tabs -->
  <div class="abs" style="left:230px;top:218px;width:96px;height:42px;background:#f3f3f3;border:2px solid #e3e3e3;border-bottom:none"></div>
  <div class="abs" style="left:324px;top:218px;width:97px;height:42px;background:#f3f3f3;border:2px solid #e3e3e3;border-bottom:none"></div>
  <div class="abs" style="left:419px;top:218px;width:97px;height:42px;background:#f3f3f3;border:2px solid #e3e3e3;border-bottom:none"></div>
  <div class="tab" style="left:243px;top:225px">5.cpp</div>
  <div class="tab" style="left:338px;top:225px">4.cpp</div>
  <div class="tab" style="left:435px;top:225px">1.cpp</div>
  <!-- editor -->
  <div id="ed"></div>
  <div id="gut"></div>
  <div id="code"></div>
  <div class="abs" style="left:326px;top:986px;width:1200px;height:40px;background:#ccffff"></div>
  <div class="abs" style="left:470px;top:986px;width:40px;height:40px;background:#f00"></div>
  <div class="ln" style="top:266px">1</div>
  <div class="cl code" style="top:266px"><span class="p">#include &lt;stdio.h&gt;</span></div>
  <div class="ln" style="top:306px">2</div>
  <div class="cl code" style="top:306px"><span class="p">#define BUF_SIZE 512</span></div>
  <div class="ln" style="top:346px">3</div>
  <div class="ln" style="top:386px">4</div>
  <div class="cl code" style="top:386px"><span class="k">int</span> get_size<span class="s">(</span><span class="k">const</span> <span class="k">char</span><span class="s">*</span> s<span class="s">)</span> <span class="s">{</span></div>
  <div class="ln" style="top:426px">5</div>
  <div class="cl code" style="top:426px">    FILE <span class="s">*</span>f <span class="s">=</span> fopen<span class="s">(</span>s<span class="s">,</span> <span class="q">"rb"</span><span class="s">);</span></div>
  <div class="ln" style="top:466px">6</div>
  <div class="cl code" style="top:466px">    <span class="k">if</span> <span class="s">(</span>f <span class="s">==</span> NULL<span class="s">)</span> <span class="s">{</span></div>
  <div class="ln" style="top:506px">7</div>
  <div class="cl code" style="top:506px">        printf<span class="s">(</span><span class="q">"no found"</span><span class="s">);</span></div>
  <div class="ln" style="top:546px">8</div>
  <div class="cl code" style="top:546px">        <span class="k">return</span> <span class="s">-</span><span class="n">1</span><span class="s">;</span></div>
  <div class="ln" style="top:586px">9</div>
  <div class="cl code" style="top:586px">    <span class="s">}</span></div>
  <div class="ln" style="top:626px">10</div>
  <div class="ln" style="top:666px">11</div>
  <div class="cl code" style="top:666px">    fseek<span class="s">(</span>f<span class="s">,</span> <span class="n">0</span><span class="s">,</span> SEEK_END<span class="s">);</span></div>
  <div class="ln" style="top:706px">12</div>
  <div class="cl code" style="top:706px">    <span class="k">long</span> size <span class="s">=</span> ftell<span class="s">(</span>f<span class="s">);</span></div>
  <div class="ln" style="top:746px">13</div>
  <div class="ln" style="top:786px">14</div>
  <div class="cl code" style="top:786px">    fclose<span class="s">(</span>f<span class="s">);</span></div>
  <div class="ln" style="top:826px">15</div>
  <div class="cl code" style="top:826px">    printf<span class="s">(</span><span class="q">"size: %ld B"</span><span class="s">,</span> size<span class="s">);</span></div>
  <div class="ln" style="top:866px">16</div>
  <div class="cl code" style="top:866px">    <span class="k">return</span> <span class="n">0</span><span class="s">;</span></div>
  <div class="ln" style="top:906px">17</div>
  <div class="cl code" style="top:906px"><span class="s">}</span></div>
  <div class="ln" style="top:946px">18</div>
  <div class="ln" style="top:986px">19</div>
  <div class="cl code" style="top:986px"><span class="k">int</span> main<span class="hl">()</span></div>
  <div class="ln" style="top:1026px">20</div>
  <div class="cl code" style="top:1026px"><span class="s">{</span></div>
  <div class="ln" style="top:1066px">21</div>
  <div class="cl code" style="top:1066px">    <span class="k">const</span> <span class="k">char</span> <span class="s">*</span>s <span class="s">=</span> <span class="q">"test.txt"</span><span class="s">;</span></div>
  <div class="ln" style="top:1106px">22</div>
  <div class="cl code" style="top:1106px">    get_size<span class="s">(</span>s<span class="s">);</span></div>
  <div class="ln" style="top:1146px">23</div>
  <div class="cl code" style="top:1146px"><span class="s">}</span></div>
  <div class="fv" style="top:418px;height:509px"></div>
  <div class="fh" style="top:605px"></div>
  <div class="fh" style="top:925px"></div>
  <div class="fb" style="top:392px"></div>
  <div class="fb" style="top:472px"></div>
  <div class="fv" style="top:1058px;height:109px"></div>
  <div class="fh" style="top:1165px"></div>
  <div class="fb" style="top:1032px"></div>
  <div class="abs" style="left:397px;top:506px;width:0;height:78px;border-left:1px dotted #808080"></div>
  <div class="abs" style="left:514px;top:215px;width:104px;height:45px;background:#f9f9f9;border:2px solid #e5e5e5;border-bottom:none"></div>
  <div class="tab" style="left:530px;top:221px">6.cpp</div>
  <!-- status bar -->
  <div class="abs" style="left:2px;top:1782px;width:1532px;height:2px;background:#dcdcdc"></div>
  <div class="abs st" style="left:6px">行:</div>
  <div class="abs st" style="left:62px">19</div>
  <div class="abs st" style="left:175px">列:</div>
  <div class="abs st" style="left:232px">11</div>
  <div class="abs st" style="left:346px">已选择:</div>
  <div class="abs st" style="left:459.5px">0</div>
</div>
<div id="winb"></div>
<!-- notepad window -->
<div id="np">
  <div class="abs" style="left:0;top:0;width:1100px;height:81px;background:#e8e8e8"></div>
  <div class="abs" style="left:96px;top:18px;width:481px;height:64px;background:#f9f9f9;border-radius:14px 14px 0 0;box-shadow:0 0 0 1px #dedede"></div>
  <svg class="abs" style="left:82px;top:66px" width="14" height="15" viewBox="0 0 14 15"><path d="M14,0V15H0C9,15 14,10 14,0Z" fill="#f9f9f9"/></svg>
  <svg class="abs" style="left:577px;top:66px" width="14" height="15" viewBox="0 0 14 15"><path d="M0,0V15H14C5,15 0,10 0,0Z" fill="#f9f9f9"/></svg>
  <svg class="abs" style="left:36px;top:32px" width="28" height="36" viewBox="0 0 28 36">
    <defs><linearGradient id="npg" x1="0" y1="0" x2="0" y2="1"><stop offset="0" stop-color="#8edcf3"/><stop offset="1" stop-color="#42aed4"/></linearGradient></defs>
    <path d="M1,5.5a1.5,1.5 0 0 1 1.5,-1.5h22a1.5,1.5 0 0 1 1.5,1.5v23.5h-25z" fill="url(#npg)"/>
    <path d="M1,30h25v1.6a2,2 0 0 1 -2,2h-21a2,2 0 0 1 -2,-2z" fill="#b4520a"/>
    <g fill="#1b7fa8"><rect x="3.4" y="1" width="2.8" height="5" rx="1.2"/><rect x="9" y="1" width="2.8" height="5" rx="1.2"/><rect x="14.7" y="1" width="2.8" height="5" rx="1.2"/><rect x="20.4" y="1" width="2.8" height="5" rx="1.2"/></g>
    <g stroke="#0f6f96" stroke-width="1.8" stroke-linecap="round"><path d="M6,10.8h15M6,16.5h15M6,22.2h15"/></g>
  </svg>
  <div class="abs nt" style="left:114px;top:35.5px;color:#1b1b1b;letter-spacing:0.75px;-webkit-text-stroke:0.3px #1b1b1b">test.txt</div>
  <svg class="abs" style="left:522px;top:39px" width="20" height="20" viewBox="0 0 20 20"><path d="M2,2L18,18M18,2L2,18" stroke="#1b1b1b" stroke-width="1.7" stroke-linecap="round"/></svg>
  <div class="abs nt" style="left:592.5px;top:35px;color:#5d5d5d">test_new.txt</div>
  <div class="abs" style="left:1051px;top:33px;width:2px;height:32px;background:#d4d4d4"></div>
  <div class="abs" style="left:0;top:81px;width:1100px;height:67px;background:#f9f9f9;border-bottom:2px solid #e9e9e9"></div>
  <div class="abs nm" style="left:29px">文件</div>
  <div class="abs nm" style="left:140px">编辑</div>
  <div class="abs nm" style="left:252px">查看</div>
  <div class="abs" style="left:921px;top:95px;font-size:27px;line-height:36px;color:#1b1b1b;letter-spacing:-0.5px">H1</div>
  <svg class="abs" style="left:969px;top:105px" width="20" height="14" viewBox="0 0 20 14"><path d="M2.5,3L10,10.5L17.5,3" fill="none" stroke="#333" stroke-width="1.7" stroke-linecap="round" stroke-linejoin="round"/></svg>
  <svg class="abs" style="left:1033px;top:101px" width="32" height="22" viewBox="0 0 32 22"><g fill="#111"><circle cx="2.8" cy="3" r="2"/><circle cx="2.8" cy="11" r="2"/><circle cx="2.8" cy="19" r="2"/></g><path d="M9,3H29M9,11H29M9,19H29" stroke="#111" stroke-width="2" stroke-linecap="round"/></svg>
  <div class="abs" style="left:0;top:148px;width:1100px;height:500px;background:#f9f9f9"></div>
  <div class="abs" style="left:32.5px;top:179.5px;font-size:32px;line-height:39.4px;color:#0a0a0a;white-space:pre;letter-spacing:0.7px">hello
world</div>
  <div id="npb" class="abs" style="left:0;top:0;width:1100px;height:650px;border:1px solid #b2b2b2;border-radius:16px;pointer-events:none"></div>
</div>
<!-- terminal window -->
<div id="tm">
  <div class="abs" style="left:0;top:0;width:800px;height:79px;background:#333333"></div>
  <div class="abs" style="left:15px;top:15px;width:481px;height:64px;background:#0c0c0c;border-radius:14px 14px 0 0"></div>
  <svg class="abs" style="left:1px;top:64px" width="14" height="14" viewBox="0 0 14 14"><path d="M14,0V14H0C9,14 14,9 14,0Z" fill="#0c0c0c"/></svg>
  <svg class="abs" style="left:496px;top:64px" width="14" height="14" viewBox="0 0 14 14"><path d="M0,0V14H14C5,14 0,9 0,0Z" fill="#0c0c0c"/></svg>
  <svg class="abs" style="left:34px;top:31px" width="32" height="32" viewBox="0 0 32 32" fill="none" stroke="#fff">
    <rect x="2.2" y="3.2" width="27.6" height="25.6" rx="5" stroke-width="2"/>
    <path d="M2.5,9.5H29.5" stroke-width="1.8"/>
  </svg>
  <div class="abs" style="left:40px;top:43.5px;font:bold 13px/14px 'Liberation Sans',sans-serif;color:#fff;letter-spacing:0.6px">C:\</div>
  <div class="abs" style="left:86.5px;top:33.5px;font-size:23px;line-height:32px;color:#fff;white-space:nowrap;letter-spacing:0.85px;-webkit-text-stroke:0.3px #fff;font-family:'Liberation Sans','Noto Sans CJK SC',sans-serif">C:\Users\gxyyy\Desktop\c语言</div>
  <svg class="abs" style="left:444px;top:36px" width="20" height="20" viewBox="0 0 20 20"><path d="M2,2L18,18M18,2L2,18" stroke="#fff" stroke-width="1.7" stroke-linecap="round"/></svg>
  <svg class="abs" style="left:526px;top:35px" width="24" height="24" viewBox="0 0 24 24"><path d="M12,1.5V22.5M1.5,12H22.5" stroke="#fff" stroke-width="1.7" stroke-linecap="round"/></svg>
  <div class="abs" style="left:570px;top:23px;width:2px;height:48px;background:#4a4a4a"></div>
  <svg class="abs" style="left:588px;top:40px" width="20" height="14" viewBox="0 0 20 14"><path d="M2.5,3L10,10.5L17.5,3" fill="none" stroke="#fff" stroke-width="1.8" stroke-linecap="round" stroke-linejoin="round"/></svg>
  <div class="abs tt" style="top:96px">size: 12 B</div>
  <div class="abs tt td" style="top:129px">--------------------------------</div>
  <div class="abs tt" style="top:170px">Process exited after 0.3007 seconds with return value 0</div>
  <div class="abs tc" style="top:205.5px">请按任意键继续<span class="tt2">. . .</span></div>
</div>
</body>
</html>
